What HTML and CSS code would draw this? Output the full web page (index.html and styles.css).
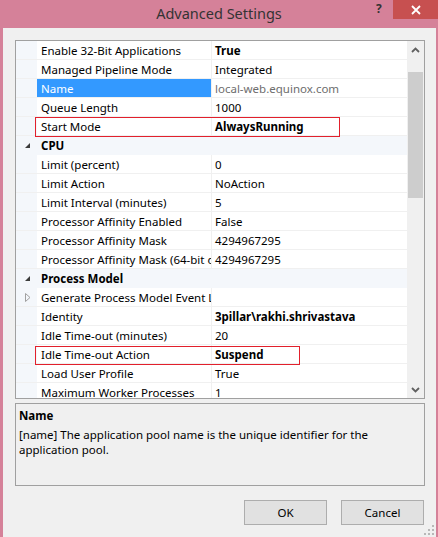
FILE: index.html
```html
<!DOCTYPE html>
<html>
<head>
<meta charset="utf-8">
<link rel="stylesheet" href="styles.css">
</head>
<body>
<div class="window">
  <div class="titlebar">
    <div class="title">Advanced Settings</div>
    <div class="help">?</div>
    <div class="close"><svg width="12" height="12" viewBox="0 0 12 12"><path d="M2 2 L10 10 M10 2 L2 10" stroke="#fff" stroke-width="1.8"/></svg></div>
  </div>
  <div class="client">
    <div class="grid">
      <div class="rows">
        <div class="row"><div class="margin"></div><div class="name">Enable 32-Bit Applications</div><div class="value bold">True</div></div>
        <div class="row"><div class="margin"></div><div class="name">Managed Pipeline Mode</div><div class="value">Integrated</div></div>
        <div class="row"><div class="margin"></div><div class="name selected">Name</div><div class="value gray">local-web.equinox.com</div></div>
        <div class="row"><div class="margin"></div><div class="name">Queue Length</div><div class="value">1000</div></div>
        <div class="row"><div class="margin"></div><div class="name">Start Mode</div><div class="value bold">AlwaysRunning</div><div class="redbox box1"></div></div>
        <div class="row cat"><div class="margin"><span class="tri-exp"></span></div><div class="catname">CPU</div></div>
        <div class="row"><div class="margin"></div><div class="name">Limit (percent)</div><div class="value">0</div></div>
        <div class="row"><div class="margin"></div><div class="name">Limit Action</div><div class="value">NoAction</div></div>
        <div class="row"><div class="margin"></div><div class="name">Limit Interval (minutes)</div><div class="value">5</div></div>
        <div class="row"><div class="margin"></div><div class="name">Processor Affinity Enabled</div><div class="value">False</div></div>
        <div class="row"><div class="margin"></div><div class="name">Processor Affinity Mask</div><div class="value">4294967295</div></div>
        <div class="row"><div class="margin"></div><div class="name">Processor Affinity Mask (64-bit option)</div><div class="value">4294967295</div></div>
        <div class="row cat"><div class="margin"><span class="tri-exp"></span></div><div class="catname">Process Model</div></div>
        <div class="row"><div class="margin"><svg class="tri-col" width="6" height="9" viewBox="0 0 6 9"><path d="M0.5 0.5 L5 4.5 L0.5 8.5 Z" fill="none" stroke="#a0a0a0" stroke-width="1"/></svg></div><div class="name">Generate Process Model Event Log Entry</div><div class="value"></div></div>
        <div class="row"><div class="margin"></div><div class="name">Identity</div><div class="value bold">3pillar\rakhi.shrivastava</div></div>
        <div class="row"><div class="margin"></div><div class="name">Idle Time-out (minutes)</div><div class="value">20</div></div>
        <div class="row"><div class="margin"></div><div class="name">Idle Time-out Action</div><div class="value bold">Suspend</div><div class="redbox box2"></div></div>
        <div class="row"><div class="margin"></div><div class="name">Load User Profile</div><div class="value">True</div></div>
        <div class="row"><div class="margin"></div><div class="name">Maximum Worker Processes</div><div class="value">1</div></div>
      </div>
      <div class="scrollbar">
        <div class="arrow"><svg width="9" height="6" viewBox="0 0 9 6"><path d="M1 5 L4.5 1.5 L8 5" fill="none" stroke="#606060" stroke-width="1.8"/></svg></div>
        <div class="track"><div class="thumb"></div></div>
        <div class="arrow"><svg width="9" height="6" viewBox="0 0 9 6"><path d="M1 1 L4.5 4.5 L8 1" fill="none" stroke="#606060" stroke-width="1.8"/></svg></div>
      </div>
    </div>
    <div class="desc">
      <div class="desc-title">Name</div>
      <div class="desc-text">[name] The application pool name is the unique identifier for the application pool.</div>
    </div>
    <div class="buttons">
      <div class="btn">OK</div>
      <div class="btn">Cancel</div>
    </div>
    <svg class="grip" width="10" height="10" viewBox="0 0 10 10">
      <rect x="8" y="0" width="2" height="2" fill="#b8b8b8"/>
      <rect x="4" y="4" width="2" height="2" fill="#b8b8b8"/>
      <rect x="8" y="4" width="2" height="2" fill="#b8b8b8"/>
      <rect x="0" y="8" width="2" height="2" fill="#b8b8b8"/>
      <rect x="4" y="8" width="2" height="2" fill="#b8b8b8"/>
      <rect x="8" y="8" width="2" height="2" fill="#b8b8b8"/>
    </svg>
  </div>
</div>
</body>
</html>
```
FILE: styles.css
```css
html, body {
  margin: 0;
  padding: 0;
}
body {
  background: #d58199;
  font-family: "Noto Sans", "Open Sans", sans-serif;
  font-size: 11.5px;
  color: #000;
  width: 438px;
  height: 537px;
  overflow: hidden;
}
.window {
  display: flex;
  flex-direction: column;
  height: 537px;
}
.titlebar {
  height: 28px;
  position: relative;
  display: flex;
  align-items: center;
  justify-content: center;
}
.title {
  font-size: 14.5px;
  color: #333;
  margin-top: -2px;
}
.help {
  position: absolute;
  left: 376px;
  top: 2px;
  font-size: 12px;
  font-weight: bold;
  color: #333;
  line-height: 14px;
}
.close {
  position: absolute;
  left: 393px;
  top: 0;
  width: 45px;
  height: 19px;
  background: #c75050;
  display: flex;
  align-items: center;
  justify-content: center;
}
.client {
  flex: 1;
  margin: 0 2px 0 3px;
  background: #f0f0f0;
  padding: 12px 12px 0 12px;
  position: relative;
}
.grid {
  width: 408px;
  height: 357px;
  border: 1px solid #a0a0a0;
  display: flex;
  background: #fff;
  overflow: hidden;
}
.rows {
  width: 391px;
  display: flex;
  flex-direction: column;
}
.row {
  height: 18px;
  flex: none;
  display: flex;
  border-bottom: 1px solid #f0f0f0;
  position: relative;
  line-height: 19px;
  white-space: nowrap;
}
.margin {
  width: 21px;
  flex: none;
  background: #f4f7fb;
  position: relative;
}
.name {
  width: 170px;
  flex: none;
  padding-left: 4px;
  border-right: 1px solid #f0f0f0;
  overflow: hidden;
  color: #000;
}
.name.selected {
  background: #3399ff;
  color: #fff;
}
.value {
  padding-left: 3px;
  flex: 1;
  overflow: hidden;
}
.bold {
  font-weight: bold;
}
.gray {
  color: #6d6d6d;
}
.cat {
  background: #f4f7fb;
  border-bottom-color: #f4f7fb;
}
.catname {
  padding-left: 4px;
  font-weight: bold;
}
.tri-exp {
  position: absolute;
  left: 9px;
  top: 7px;
  width: 0;
  height: 0;
  border-left: 5px solid transparent;
  border-bottom: 5px solid #3c3c3c;
}
.tri-col {
  position: absolute;
  left: 9px;
  top: 5px;
}
.redbox {
  position: absolute;
  left: 19px;
  top: 0;
  height: 18px;
  border: 1px solid #e2202c;
  pointer-events: none;
  z-index: 2;
}
.box1 {
  width: 303px;
}
.box2 {
  width: 263px;
  top: 1px;
  height: 17px;
}
.scrollbar {
  width: 17px;
  flex: none;
  background: #f0f0f0;
  display: flex;
  flex-direction: column;
}
.arrow {
  height: 17px;
  display: flex;
  align-items: center;
  justify-content: center;
  flex: none;
}
.track {
  flex: 1;
  padding: 14px 1px 0 1px;
}
.thumb {
  height: 126px;
  background: #cdcdcd;
}
.desc {
  margin-top: 4px;
  width: 402px;
  height: 77px;
  border: 1px solid #a0a0a0;
  padding: 4px 3px 0 3px;
}
.desc-title {
  font-weight: bold;
  line-height: 16px;
}
.desc-text {
  line-height: 15px;
  margin-top: 3px;
  padding-right: 30px;
}
.buttons {
  display: flex;
  justify-content: flex-end;
  gap: 14px;
  margin-top: 14px;
  width: 409px;
}
.btn {
  width: 81px;
  height: 23px;
  border: 1px solid #adadad;
  background: #e1e1e1;
  display: flex;
  align-items: center;
  justify-content: center;
}
.grip {
  position: absolute;
  right: 2px;
  bottom: 2px;
}
```
